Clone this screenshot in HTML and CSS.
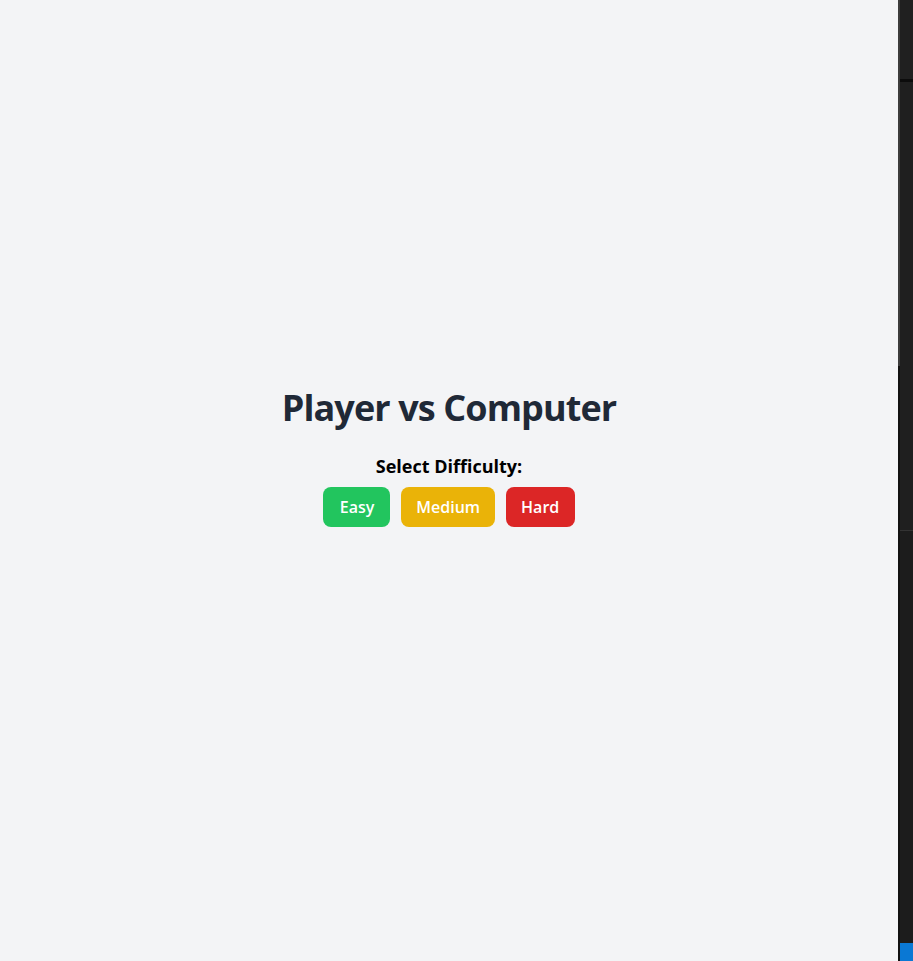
FILE: index.html
```html
<!DOCTYPE html>
<html lang="en">
<head>
<meta charset="utf-8">
<title>Player vs Computer</title>
<link rel="stylesheet" href="styles.css">
</head>
<body>
<div class="app">
  <main class="main">
    <div class="panel">
      <h1 class="title">Player vs Computer</h1>
      <p class="label">Select Difficulty:</p>
      <div class="buttons">
        <button class="btn btn-easy">Easy</button>
        <button class="btn btn-medium">Medium</button>
        <button class="btn btn-hard">Hard</button>
      </div>
    </div>
  </main>
  <aside class="side">
    <div class="side-edge">
      <div class="side-thumb"></div>
    </div>
    <div class="side-body">
      <div class="side-top"></div>
      <div class="side-sep"></div>
      <div class="side-mid"></div>
      <div class="side-line"></div>
      <div class="side-low"></div>
      <div class="side-status"></div>
    </div>
  </aside>
</div>
</body>
</html>
```
FILE: styles.css
```css
* { box-sizing: border-box; }
html, body { margin: 0; padding: 0; height: 100%; }
body { font-family: "Open Sans", "Noto Sans", sans-serif; background: #f3f4f6; }
.app { display: flex; height: 961px; }
.main { flex: 1; display: flex; justify-content: center; background: #f3f4f6; padding-top: 382px; }
.panel { display: flex; flex-direction: column; align-items: center; }
.title { margin: 0; font-size: 36px; font-weight: 700; color: #1f2937; line-height: 52px; letter-spacing: -0.9px; }
.label { margin: 19px 0 0; font-size: 18px; font-weight: 700; color: #000; line-height: 26px; }
.buttons { display: flex; gap: 11px; margin-top: 8px; }
.btn { border: 0; border-radius: 8px; height: 40px; padding: 0 16px 0 17px; font-family: inherit; font-size: 16px; font-weight: 600; color: #fff; }
.btn-easy { background: #22c55e; }
.btn-medium { background: #eab308; padding: 0 15px; }
.btn-hard { background: #dc2626; padding: 0 16px 0 15px; }
.side { width: 15px; display: flex; }
.side-edge { width: 2px; background: #111; display: flex; flex-direction: column; }
.side-thumb { height: 366px; background: #3c3c3c; }
.side-body { flex: 1; display: flex; flex-direction: column; background: #1f1f1f; }
.side-top { height: 79px; background: #202020; }
.side-sep { height: 3px; background: #0c0c0c; }
.side-mid { height: 448px; }
.side-line { height: 1px; background: #333; }
.side-low { flex: 1; background: #1c1c1c; }
.side-status { height: 18px; background: #0a78d4; }
```
